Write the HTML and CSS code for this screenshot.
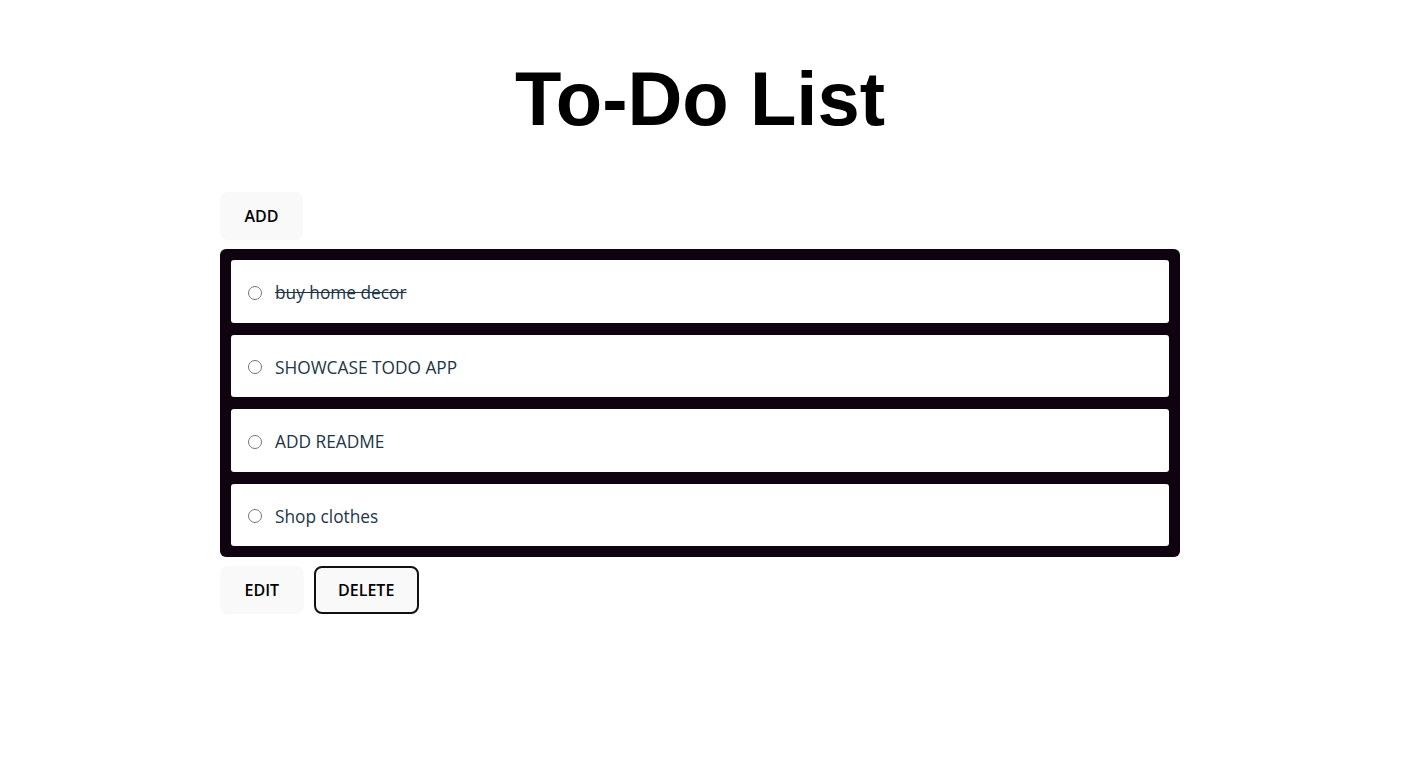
FILE: index.html
```html
<!DOCTYPE html>
<html lang="en">
<head>
<meta charset="utf-8">
<title>To-Do List</title>
<link rel="stylesheet" href="styles.css">
</head>
<body>
<main class="app">
  <h1 class="title">To-Do List</h1>
  <div class="toolbar">
    <button class="btn">ADD</button>
  </div>
  <ul class="list">
    <li class="item"><input type="radio" class="radio" name="todo"><span class="label done">buy home decor</span></li>
    <li class="item"><input type="radio" class="radio" name="todo"><span class="label">SHOWCASE TODO APP</span></li>
    <li class="item"><input type="radio" class="radio" name="todo"><span class="label">ADD README</span></li>
    <li class="item"><input type="radio" class="radio" name="todo"><span class="label">Shop clothes</span></li>
  </ul>
  <div class="actions">
    <button class="btn">EDIT</button>
    <button class="btn btn-focus">DELETE</button>
  </div>
</main>
</body>
</html>
```
FILE: styles.css
```css
* { box-sizing: border-box; }
html, body { margin: 0; background: #ffffff; }
body {
  font-family: "Open Sans", "Noto Sans", sans-serif;
  color: #213547;
  padding-right: 5px;
}
.app {
  width: 960px;
  margin: 0 auto;
  padding-top: 52px;
}
.title {
  margin: 0 0 46px;
  text-align: center;
  font-family: "Liberation Sans", Arial, sans-serif;
  font-weight: 700;
  font-size: 76px;
  line-height: 94px;
  color: #000;
}
.toolbar { display: flex; margin-bottom: 9px; }
.btn {
  font-family: "Open Sans", "Noto Sans", sans-serif;
  font-size: 16px;
  font-weight: 600;
  color: #000;
  background: #f9f9f9;
  border: 2px solid transparent;
  border-radius: 8px;
  height: 48px;
  padding: 0 22.5px;
  cursor: pointer;
}
.btn-focus { border-color: #111; }
.list {
  list-style: none;
  margin: 0;
  padding: 11px;
  background: #0f030f;
  border-radius: 6px;
  display: flex;
  flex-direction: column;
  gap: 12px;
}
.item {
  background: #fff;
  border-radius: 3px;
  height: 62.5px;
  display: flex;
  align-items: center;
  padding: 3px 0 0 17px;
}
.radio {
  margin: 0 13px 0 0;
  width: 14px;
  height: 14px;
  appearance: none;
  border: 1px solid #777;
  border-radius: 50%;
  background: #fff;
}
.label {
  font-size: 17.3px;
  font-weight: 400;
  color: #213547;
}
.done { text-decoration: line-through; }
.actions {
  display: flex;
  gap: 10px;
  margin-top: 9px;
}
```
